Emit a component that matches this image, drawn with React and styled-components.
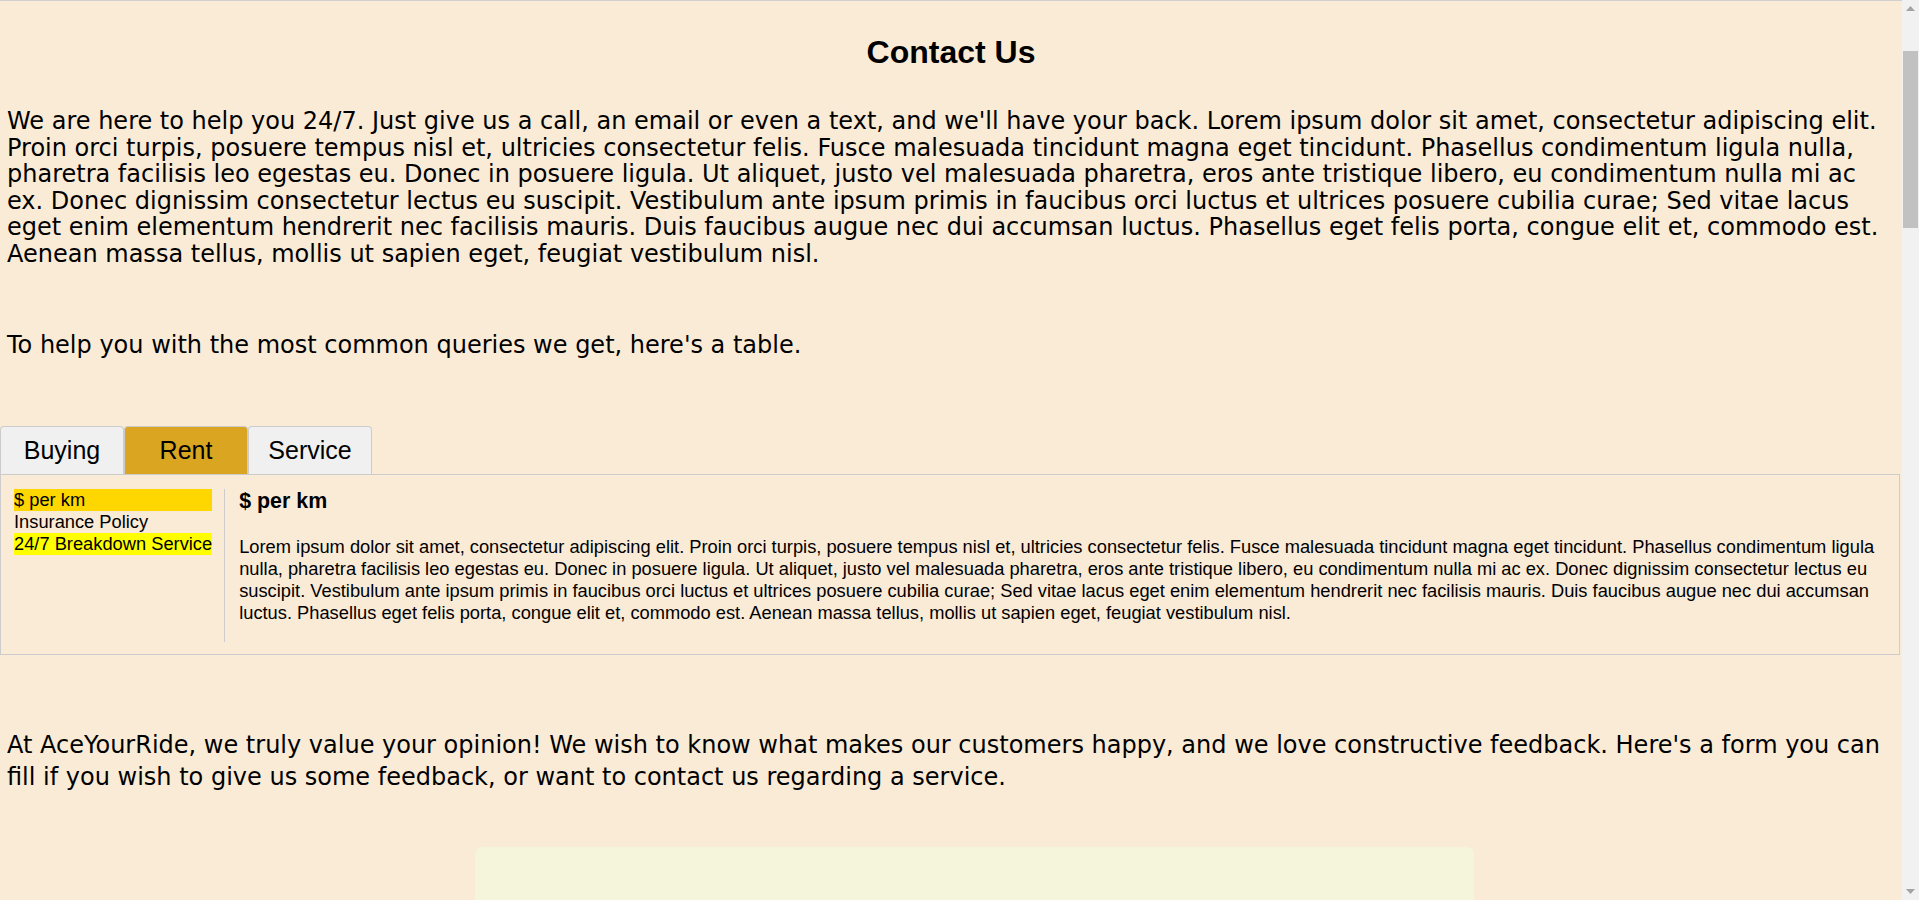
import { useState } from "react";
import styled, { createGlobalStyle } from "styled-components";

const LOREM =
  "Lorem ipsum dolor sit amet, consectetur adipiscing elit. Proin orci turpis, posuere tempus nisl et, ultricies consectetur felis. Fusce malesuada tincidunt magna eget tincidunt. Phasellus condimentum ligula nulla, pharetra facilisis leo egestas eu. Donec in posuere ligula. Ut aliquet, justo vel malesuada pharetra, eros ante tristique libero, eu condimentum nulla mi ac ex. Donec dignissim consectetur lectus eu suscipit. Vestibulum ante ipsum primis in faucibus orci luctus et ultrices posuere cubilia curae; Sed vitae lacus eget enim elementum hendrerit nec facilisis mauris. Duis faucibus augue nec dui accumsan luctus. Phasellus eget felis porta, congue elit et, commodo est. Aenean massa tellus, mollis ut sapien eget, feugiat vestibulum nisl.";

const TABS = {
  Buying: [
    { label: "Down payment", text: LOREM },
    { label: "Financing options", text: LOREM },
    { label: "Trade-in", text: LOREM },
  ],
  Rent: [
    { label: "$ per km", text: LOREM },
    { label: "Insurance Policy", text: LOREM },
    { label: "24/7 Breakdown Service", text: LOREM, flagged: true },
  ],
  Service: [
    { label: "Booking a slot", text: LOREM },
    { label: "Warranty", text: LOREM },
    { label: "Roadside help", text: LOREM },
  ],
};

// where the window sits in the page when the screenshot was taken
const SCROLL_THUMB = { offset: 34, size: 177 };

export default function App() {
  const [tab, setTab] = useState("Rent");
  const [item, setItem] = useState(0);
  const entries = TABS[tab];
  const current = entries[item];

  return (
    <>
      <GlobalStyle />
      <Page>
        <Title>Contact Us</Title>

        <Paragraph $top={37} $lh={26.5}>
          We are here to help you 24/7. Just give us a call, an email or even a
          text, and we'll have your back. {LOREM}
        </Paragraph>
        <Paragraph $top={65} $lh={26.5}>
          To help you with the most common queries we get, here's a table.
        </Paragraph>

        <TabBar>
          {Object.keys(TABS).map((name) => (
            <Tab
              key={name}
              $active={name === tab}
              onClick={() => {
                setTab(name);
                setItem(0);
              }}
            >
              {name}
            </Tab>
          ))}
        </TabBar>

        <Panel>
          <Topics>
            {entries.map((entry, i) => (
              <Topic
                key={entry.label}
                $selected={i === item}
                $flagged={entry.flagged}
                onClick={() => setItem(i)}
              >
                {entry.label}
              </Topic>
            ))}
          </Topics>
          <Detail>
            <DetailTitle>{current.label}</DetailTitle>
            <DetailText>{current.text}</DetailText>
          </Detail>
        </Panel>

        <Paragraph $top={74} $lh={32}>
          At AceYourRide, we truly value your opinion! We wish to know what
          makes our customers happy, and we love constructive feedback. Here's
          a form you can fill if you wish to give us some feedback, or want to
          contact us regarding a service.
        </Paragraph>

        <FormCard>
          <FormTitle>Feedback Form</FormTitle>
          <Field>
            <Label htmlFor="name">Name</Label>
            <Input id="name" type="text" placeholder="Your name" />
          </Field>
          <Field>
            <Label htmlFor="email">Email</Label>
            <Input id="email" type="email" placeholder="you@example.com" />
          </Field>
          <Field>
            <Label htmlFor="phone">Phone</Label>
            <Input id="phone" type="tel" placeholder="Phone number" />
          </Field>
          <Field>
            <Label htmlFor="topic">Regarding</Label>
            <Select id="topic" defaultValue="Rent">
              <option>Buying</option>
              <option>Rent</option>
              <option>Service</option>
            </Select>
          </Field>
          <Field>
            <Label htmlFor="message">Message</Label>
            <Message id="message" rows={12} placeholder="Tell us more..." />
          </Field>
          <Submit type="button">Submit</Submit>
        </FormCard>
      </Page>

      <ScrollBar aria-hidden="true">
        <ScrollArrow>
          <svg width="9" height="5" viewBox="0 0 9 5">
            <path d="M0 5 L4.5 0 L9 5 Z" fill="#a3a3a3" />
          </svg>
        </ScrollArrow>
        <ScrollTrack>
          <ScrollThumb
            style={{
              marginTop: SCROLL_THUMB.offset,
              height: SCROLL_THUMB.size,
            }}
          />
        </ScrollTrack>
        <ScrollArrow>
          <svg width="9" height="5" viewBox="0 0 9 5">
            <path d="M0 0 L9 0 L4.5 5 Z" fill="#a3a3a3" />
          </svg>
        </ScrollArrow>
      </ScrollBar>
    </>
  );
}

const GlobalStyle = createGlobalStyle`
  html, body {
    margin: 0;
    padding: 0;
  }

  body {
    background: #faebd7;
    color: #000;
    border-top: 1px solid #d0d0d0;
    font-family: "DejaVu Sans", sans-serif;
  }
`;

const Page = styled.main`
  display: flex;
  flex-direction: column;
  margin-right: 17px;
  padding-bottom: 300px;
`;

const Title = styled.h1`
  margin: 33px 0 0;
  font-family: "Liberation Sans", Arial, sans-serif;
  font-size: 32px;
  font-weight: 700;
  text-align: center;
`;

const Paragraph = styled.p`
  margin: ${(p) => p.$top}px 0 0;
  padding: 0 7px;
  font-family: "DejaVu Sans", sans-serif;
  font-size: 24px;
  line-height: ${(p) => p.$lh}px;
`;

const TabBar = styled.div`
  display: flex;
  margin-top: 67px;
`;

const Tab = styled.button`
  width: 124px;
  height: 48px;
  padding: 0;
  border: 1px solid #cccccc;
  border-bottom: none;
  border-radius: 4px 4px 0 0;
  background: ${(p) => (p.$active ? "#daa520" : "#f0f0f0")};
  color: #000;
  font-family: "Liberation Sans", Arial, sans-serif;
  font-size: 25px;
  cursor: pointer;
`;

const Panel = styled.section`
  display: flex;
  align-items: stretch;
  margin-right: 2px;
  padding: 14px 12px 12px;
  border: 1px solid #cccccc;
  font-family: "Liberation Sans", Arial, sans-serif;
  font-size: 18.3px;
`;

const Topics = styled.ul`
  list-style: none;
  margin: 0;
  padding: 0 12px 0 1px;
  border-right: 1px solid #cccccc;
  flex: none;
`;

const Topic = styled.li`
  line-height: 22px;
  white-space: nowrap;
  cursor: pointer;
  background: ${(p) =>
    p.$selected ? "#ffd700" : p.$flagged ? "#ffff00" : "transparent"};
`;

const Detail = styled.div`
  flex: 1;
  padding: 0 0 0 14px;
`;

const DetailTitle = styled.h3`
  margin: 0 0 23px;
  font-size: 21.4px;
  line-height: 24px;
  font-weight: 700;
`;

const DetailText = styled.p`
  margin: 0 0 18px;
  line-height: 22.2px;
`;

const FormCard = styled.form`
  box-sizing: border-box;
  align-self: flex-start;
  width: 999px;
  min-height: 1400px;
  margin: 54px 0 0 475px;
  padding: 72px 48px 40px;
  border-radius: 8px;
  background: #f5f5dc;
  display: flex;
  flex-direction: column;
  gap: 28px;
  font-family: "Liberation Sans", Arial, sans-serif;
`;

const FormTitle = styled.h2`
  margin: 0;
  font-size: 28px;
  text-align: center;
`;

const Field = styled.div`
  display: flex;
  flex-direction: column;
  gap: 8px;
`;

const Label = styled.label`
  font-size: 18px;
  font-weight: 700;
`;

const Input = styled.input`
  height: 40px;
  padding: 0 12px;
  border: 1px solid #cccccc;
  border-radius: 4px;
  font-size: 18px;
`;

const Select = styled.select`
  height: 42px;
  padding: 0 12px;
  border: 1px solid #cccccc;
  border-radius: 4px;
  font-size: 18px;
`;

const Message = styled.textarea`
  padding: 12px;
  border: 1px solid #cccccc;
  border-radius: 4px;
  font-size: 18px;
  resize: vertical;
`;

const Submit = styled.button`
  align-self: center;
  padding: 12px 40px;
  border: none;
  border-radius: 4px;
  background: #daa520;
  font-size: 20px;
  cursor: pointer;
`;

/* stand-in for the browser's own scrollbar seen in the screenshot */
const ScrollBar = styled.div`
  position: fixed;
  top: 0;
  right: 0;
  bottom: 0;
  width: 17px;
  display: flex;
  flex-direction: column;
  background: #f1f1f1;
`;

const ScrollArrow = styled.div`
  height: 17px;
  flex: none;
  display: flex;
  align-items: center;
  justify-content: center;
`;

const ScrollTrack = styled.div`
  flex: 1;
  display: flex;
  flex-direction: column;
  padding: 0 1px;
`;

const ScrollThumb = styled.div`
  background: #c1c1c1;
`;
